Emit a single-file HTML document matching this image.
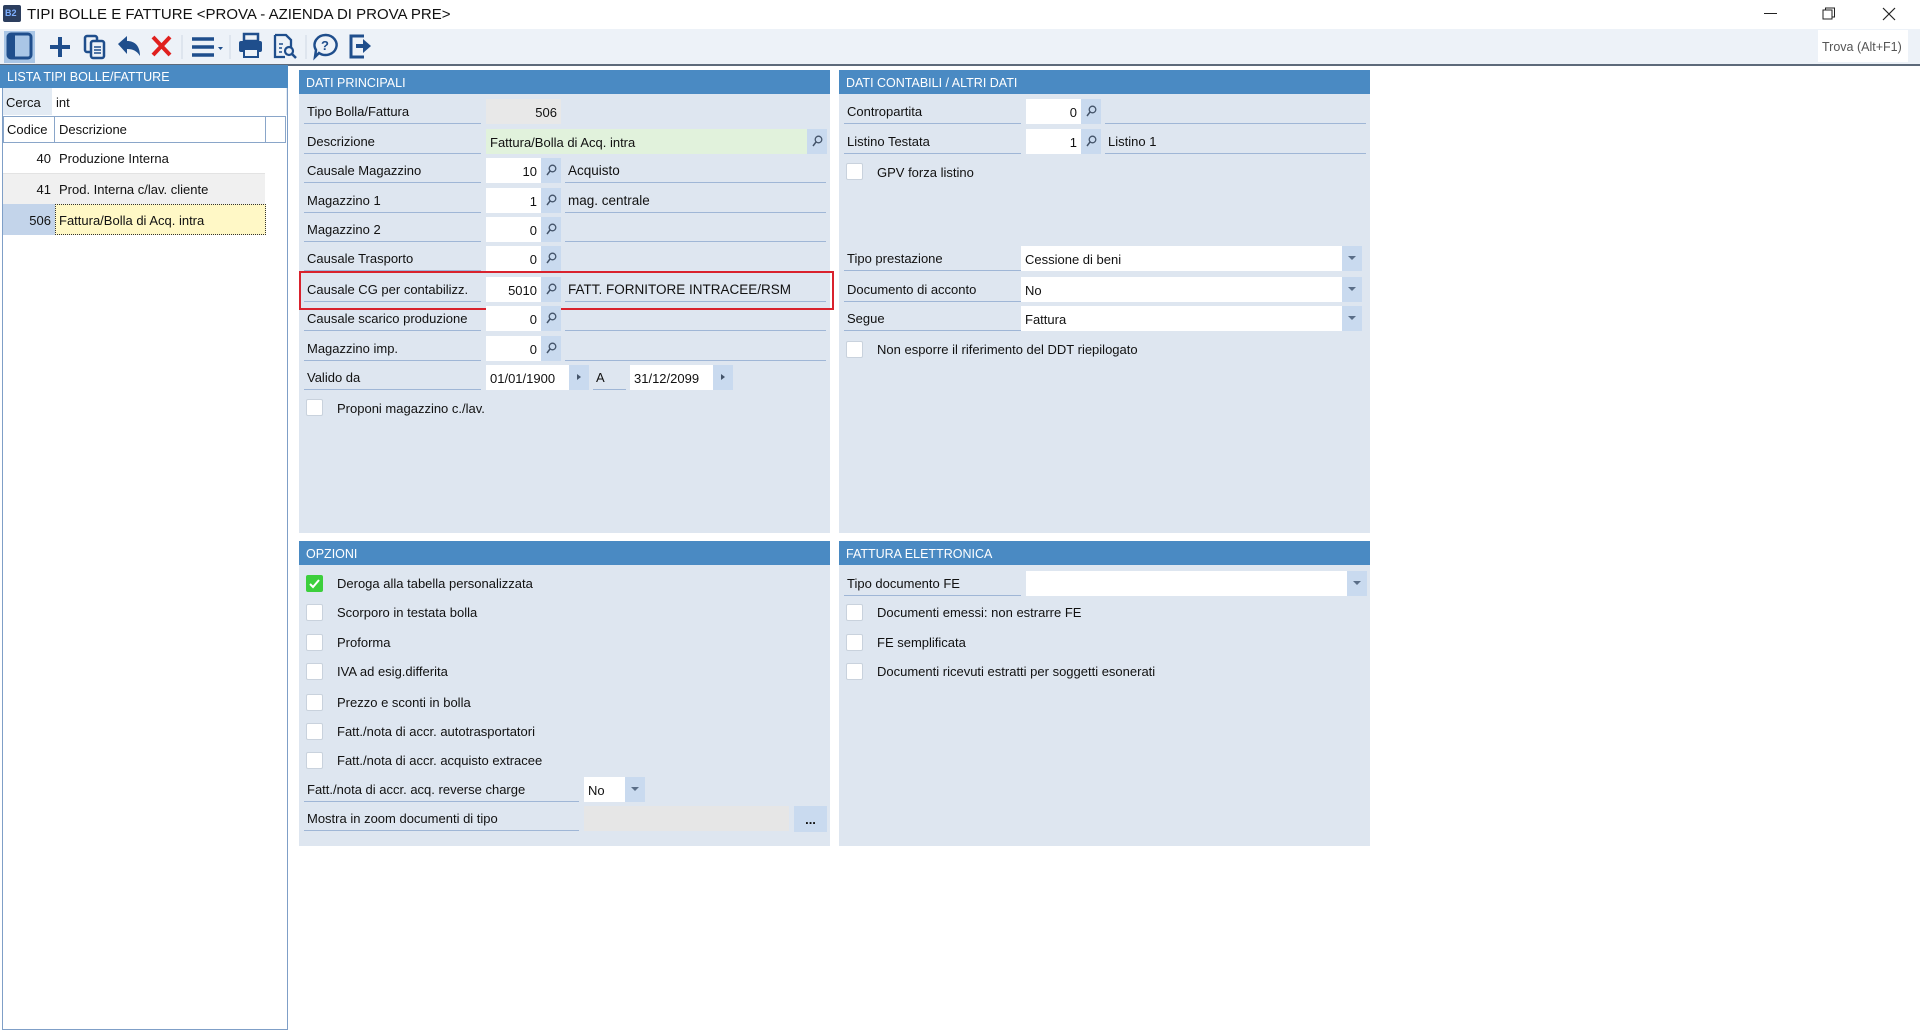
<!DOCTYPE html>
<html><head><meta charset="utf-8">
<style>
*{box-sizing:border-box;margin:0;padding:0}
body{width:1920px;height:1030px;background:#fff;font-family:"Liberation Sans",Tahoma,sans-serif;font-size:13px;color:#111;position:relative;overflow:hidden}
.a{position:absolute}
.hd{position:absolute;background:#4a8ac3;color:#fff;font-size:12.5px;padding:6px 0 0 7px;height:24px}
.pn{position:absolute;background:#dee6f0}
.lb{position:absolute;height:26px;border-bottom:1px solid #9fb6d6;padding:6px 0 0 3px;white-space:nowrap}
.in{position:absolute;height:25px;background:#fff;padding:6px 4px 0 4px;white-space:nowrap}
.r{text-align:right}
.bt{position:absolute;height:25px;width:20px;background:#c9daef}
.bt svg{position:absolute;left:5px;top:6px}
.dl{position:absolute;height:26px;border-bottom:1px solid #9fb6d6;padding:6px 0 0 3px;white-space:nowrap}
.cb{position:absolute;width:17px;height:17px;background:#fff;border:1px solid #c9d2dd;border-radius:2px}
.ct{position:absolute;white-space:nowrap}
.dd{position:absolute;width:20px;height:25px;background:#c9daef}
.dd:after{content:"";position:absolute;left:6px;top:10px;border-left:4px solid transparent;border-right:4px solid transparent;border-top:4px solid #5a6e88}
</style></head><body>
<div class="a" style="left:3px;top:5px;width:18px;height:17px;background:#2c3e5e;border-radius:2px;color:#7fb0ff;font-size:9px;font-weight:bold;padding:3px 0 0 2px">B2</div>
<div class="a" style="left:27px;top:6px;font-size:15px;color:#111">TIPI BOLLE E FATTURE &lt;PROVA - AZIENDA DI PROVA PRE&gt;</div>
<div class="a" style="left:1764px;top:13px;width:13px;height:1px;background:#222"></div>
<svg class="a" style="left:1822px;top:7px" width="14" height="14"><rect x="1" y="3" width="9" height="9" fill="none" stroke="#222"/><path d="M3.5 3V1h9v9h-2.5" fill="none" stroke="#222"/></svg>
<svg class="a" style="left:1882px;top:7px" width="14" height="14"><path d="M1 1L13 13M13 1L1 13" stroke="#222" stroke-width="1.2"/></svg>
<div class="a" style="left:0;top:29px;width:1920px;height:35px;background:#edf2f8"></div>
<div class="a" style="left:0;top:64px;width:1920px;height:2px;background:#5d6a7a"></div>
<div class="a" style="left:4px;top:31px;width:31px;height:32px;background:#a9c6e6"></div>
<svg class="a" style="left:0;top:29px" width="380" height="35">
<rect x="8" y="5" width="23" height="24" rx="3" fill="none" stroke="#1f4e8c" stroke-width="3"/><rect x="9" y="6" width="6" height="22" fill="#1f4e8c"/>
<path d="M60 8v20M50 18h20" stroke="#1f4e8c" stroke-width="4"/>
<rect x="85" y="7" width="12" height="16" rx="2" fill="none" stroke="#1f4e8c" stroke-width="2.5"/><rect x="91" y="12" width="13" height="17" rx="2" fill="#edf2f8" stroke="#1f4e8c" stroke-width="2.5"/><path d="M94 18h7M94 21h7M94 24h7" stroke="#1f4e8c" stroke-width="1.5"/>
<path d="M118 15l9-8v5c8 0 13 5 13 15c-3-5-7-7-13-7v5z" fill="#1f4e8c"/>
<path d="M153 8l17 18M170 8l-17 18" stroke="#e0201e" stroke-width="4"/>
<path d="M182 6v24M230 6v24M306 6v24" stroke="#cfd8e3"/>
<path d="M192 10h22M192 18h22M192 26h22" stroke="#1f4e8c" stroke-width="3.5"/><path d="M218 18h5l-2.5 3z" fill="#1f4e8c"/>
<rect x="244" y="5" width="14" height="7" fill="none" stroke="#1f4e8c" stroke-width="2.5"/><rect x="239" y="12" width="23" height="11" rx="2" fill="#1f4e8c"/><rect x="244" y="20" width="14" height="8" fill="#edf2f8" stroke="#1f4e8c" stroke-width="2"/>
<path d="M275 6h11l5 5v8M275 6v22h10" fill="none" stroke="#1f4e8c" stroke-width="2.3"/><path d="M279 15h4M279 19h3M279 23h3" stroke="#1f4e8c" stroke-width="1.5"/><circle cx="289" cy="22" r="4" fill="none" stroke="#1f4e8c" stroke-width="2.2"/><path d="M292 25l4 4" stroke="#1f4e8c" stroke-width="2.5"/>
<path d="M326 6a11 10 0 1 1 -7 18l-4 4 1-7a11 10 0 0 1 10-15z" fill="none" stroke="#1f4e8c" stroke-width="2.5"/><text x="321" y="21" font-family="Liberation Sans" font-weight="bold" font-size="13" fill="#1f4e8c">?</text>
<path d="M364 7h-13v21h13" fill="none" stroke="#1f4e8c" stroke-width="3"/><path d="M356 15h7v-5l8 7-8 7v-5h-7z" fill="#1f4e8c"/>
</svg>
<div class="a" style="left:1818px;top:30px;width:90px;height:32px;background:#fff;color:#555;font-size:12.5px;padding:10px 0 0 4px">Trova (Alt+F1)</div>

<div class="a" style="left:2px;top:65px;width:286px;height:965px;border:1px solid #7f9fc7;border-top:none;background:#fff"></div>
<div class="hd" style="left:0;top:65px;width:288px;height:23px;padding-top:5px">LISTA TIPI BOLLE/FATTURE</div>
<div class="a" style="left:3px;top:88px;width:284px;height:27px;background:#e3ebf4"></div>
<div class="a" style="left:6px;top:95px">Cerca</div>
<div class="a" style="left:52px;top:88px;width:234px;height:27px;background:#fff;padding:7px 0 0 4px">int</div>
<div class="a" style="left:3px;top:116px;width:283px;height:27px;border:1px solid #8aa6c9;background:#fff"></div>
<div class="a" style="left:54px;top:116px;width:1px;height:27px;background:#8aa6c9"></div>
<div class="a" style="left:265px;top:116px;width:1px;height:27px;background:#8aa6c9"></div>
<div class="a" style="left:7px;top:122px">Codice</div>
<div class="a" style="left:59px;top:122px">Descrizione</div>
<div class="a r" style="left:3px;top:151px;width:48px">40</div><div class="a" style="left:59px;top:151px">Produzione Interna</div>
<div class="a" style="left:3px;top:173px;width:262px;height:31px;background:#f0f0f0;border-top:1px solid #e3e3e3"></div>
<div class="a r" style="left:3px;top:182px;width:48px">41</div><div class="a" style="left:59px;top:182px">Prod. Interna c/lav. cliente</div>
<div class="a" style="left:3px;top:204px;width:52px;height:31px;background:#c3d4ea"></div>
<div class="a" style="left:55px;top:204px;width:211px;height:31px;background:#fff8c6;border:1px dotted #333"></div>
<div class="a r" style="left:3px;top:213px;width:48px">506</div><div class="a" style="left:59px;top:213px">Fattura/Bolla di Acq. intra</div>

<div class="pn" style="left:299px;top:70px;width:531px;height:463px"></div>
<div class="hd" style="left:299px;top:70px;width:531px">DATI PRINCIPALI</div>
<div class="lb" style="left:304px;top:98px;width:177px">Tipo Bolla/Fattura</div>
<div class="in r" style="left:486px;top:99px;width:75px;background:#e8e8e8">506</div>
<div class="lb" style="left:304px;top:128px;width:177px">Descrizione</div>
<div class="in" style="left:486px;top:129px;width:321px;background:#e1f2dc">Fattura/Bolla di Acq. intra</div>
<div class="bt" style="left:807px;top:129px"><svg width="11" height="12"><circle cx="6.5" cy="4.5" r="3.3" fill="none" stroke="#44546a" stroke-width="1.3"/><path d="M4 7L1 11" stroke="#44546a" stroke-width="1.5"/></svg></div>

<div class="lb" style="left:304px;top:157px;width:177px">Causale Magazzino</div>
<div class="in r" style="left:486px;top:158px;width:55px">10</div>
<div class="bt" style="left:541px;top:158px"><svg width="11" height="12"><circle cx="6.5" cy="4.5" r="3.3" fill="none" stroke="#44546a" stroke-width="1.3"/><path d="M4 7L1 11" stroke="#44546a" stroke-width="1.5"/></svg></div>
<div class="dl" style="left:565px;top:157px;width:261px;font-size:13.5px">Acquisto</div>

<div class="lb" style="left:304px;top:187px;width:177px">Magazzino 1</div>
<div class="in r" style="left:486px;top:188px;width:55px">1</div>
<div class="bt" style="left:541px;top:188px"><svg width="11" height="12"><circle cx="6.5" cy="4.5" r="3.3" fill="none" stroke="#44546a" stroke-width="1.3"/><path d="M4 7L1 11" stroke="#44546a" stroke-width="1.5"/></svg></div>
<div class="dl" style="left:565px;top:187px;width:261px;font-size:13.5px">mag. centrale</div>

<div class="lb" style="left:304px;top:216px;width:177px">Magazzino 2</div>
<div class="in r" style="left:486px;top:217px;width:55px">0</div>
<div class="bt" style="left:541px;top:217px"><svg width="11" height="12"><circle cx="6.5" cy="4.5" r="3.3" fill="none" stroke="#44546a" stroke-width="1.3"/><path d="M4 7L1 11" stroke="#44546a" stroke-width="1.5"/></svg></div>
<div class="dl" style="left:565px;top:216px;width:261px"></div>

<div class="lb" style="left:304px;top:245px;width:177px">Causale Trasporto</div>
<div class="in r" style="left:486px;top:246px;width:55px">0</div>
<div class="bt" style="left:541px;top:246px"><svg width="11" height="12"><circle cx="6.5" cy="4.5" r="3.3" fill="none" stroke="#44546a" stroke-width="1.3"/><path d="M4 7L1 11" stroke="#44546a" stroke-width="1.5"/></svg></div>

<div class="lb" style="left:304px;top:276px;width:177px">Causale CG per contabilizz.</div>
<div class="in r" style="left:486px;top:277px;width:55px">5010</div>
<div class="bt" style="left:541px;top:277px"><svg width="11" height="12"><circle cx="6.5" cy="4.5" r="3.3" fill="none" stroke="#44546a" stroke-width="1.3"/><path d="M4 7L1 11" stroke="#44546a" stroke-width="1.5"/></svg></div>
<div class="dl" style="left:565px;top:276px;width:261px;font-size:13.5px">FATT. FORNITORE INTRACEE/RSM</div>
<div class="a" style="left:299px;top:271px;width:535px;height:39px;border:2.5px solid #d9222d"></div>

<div class="lb" style="left:304px;top:305px;width:177px">Causale scarico produzione</div>
<div class="in r" style="left:486px;top:306px;width:55px">0</div>
<div class="bt" style="left:541px;top:306px"><svg width="11" height="12"><circle cx="6.5" cy="4.5" r="3.3" fill="none" stroke="#44546a" stroke-width="1.3"/><path d="M4 7L1 11" stroke="#44546a" stroke-width="1.5"/></svg></div>
<div class="dl" style="left:565px;top:305px;width:261px"></div>

<div class="lb" style="left:304px;top:335px;width:177px">Magazzino imp.</div>
<div class="in r" style="left:486px;top:336px;width:55px">0</div>
<div class="bt" style="left:541px;top:336px"><svg width="11" height="12"><circle cx="6.5" cy="4.5" r="3.3" fill="none" stroke="#44546a" stroke-width="1.3"/><path d="M4 7L1 11" stroke="#44546a" stroke-width="1.5"/></svg></div>
<div class="dl" style="left:565px;top:335px;width:261px"></div>

<div class="lb" style="left:304px;top:364px;width:177px">Valido da</div>
<div class="in" style="left:486px;top:365px;width:83px">01/01/1900</div>
<div class="bt" style="left:569px;top:365px"><svg width="10" height="12"><path d="M3 3l4 3-4 3z" fill="#44546a"/></svg></div>
<div class="dl" style="left:593px;top:364px;width:33px">A</div>
<div class="in" style="left:630px;top:365px;width:83px">31/12/2099</div>
<div class="bt" style="left:713px;top:365px"><svg width="10" height="12"><path d="M3 3l4 3-4 3z" fill="#44546a"/></svg></div>
<div class="cb" style="left:306px;top:399px"></div><div class="ct" style="left:337px;top:401px">Proponi magazzino c./lav.</div>

<div class="pn" style="left:839px;top:70px;width:531px;height:463px"></div>
<div class="hd" style="left:839px;top:70px;width:531px">DATI CONTABILI / ALTRI DATI</div>
<div class="lb" style="left:844px;top:98px;width:177px">Contropartita</div>
<div class="in r" style="left:1026px;top:99px;width:55px">0</div>
<div class="bt" style="left:1081px;top:99px"><svg width="11" height="12"><circle cx="6.5" cy="4.5" r="3.3" fill="none" stroke="#44546a" stroke-width="1.3"/><path d="M4 7L1 11" stroke="#44546a" stroke-width="1.5"/></svg></div>
<div class="dl" style="left:1105px;top:98px;width:261px"></div>
<div class="lb" style="left:844px;top:128px;width:177px">Listino Testata</div>
<div class="in r" style="left:1026px;top:129px;width:55px">1</div>
<div class="bt" style="left:1081px;top:129px"><svg width="11" height="12"><circle cx="6.5" cy="4.5" r="3.3" fill="none" stroke="#44546a" stroke-width="1.3"/><path d="M4 7L1 11" stroke="#44546a" stroke-width="1.5"/></svg></div>
<div class="dl" style="left:1105px;top:128px;width:261px">Listino 1</div>
<div class="cb" style="left:846px;top:163px"></div><div class="ct" style="left:877px;top:165px">GPV forza listino</div>
<div class="lb" style="left:844px;top:245px;width:177px">Tipo prestazione</div>
<div class="in" style="left:1021px;top:246px;width:321px">Cessione di beni</div><div class="dd" style="left:1342px;top:246px"></div>
<div class="lb" style="left:844px;top:276px;width:177px">Documento di acconto</div>
<div class="in" style="left:1021px;top:277px;width:321px">No</div><div class="dd" style="left:1342px;top:277px"></div>
<div class="lb" style="left:844px;top:305px;width:177px">Segue</div>
<div class="in" style="left:1021px;top:306px;width:321px">Fattura</div><div class="dd" style="left:1342px;top:306px"></div>
<div class="cb" style="left:846px;top:341px"></div><div class="ct" style="left:877px;top:342px">Non esporre il riferimento del DDT riepilogato</div>

<div class="pn" style="left:299px;top:541px;width:531px;height:305px"></div>
<div class="hd" style="left:299px;top:541px;width:531px">OPZIONI</div>
<div class="cb" style="left:306px;top:575px;background:#3ccf3c;border-color:#3ccf3c"><svg width="15" height="15" style="position:absolute;left:0;top:0"><path d="M3 8l3 3 6-7" fill="none" stroke="#fff" stroke-width="2"/></svg></div>
<div class="ct" style="left:337px;top:576px">Deroga alla tabella personalizzata</div>
<div class="cb" style="left:306px;top:604px"></div><div class="ct" style="left:337px;top:605px">Scorporo in testata bolla</div>
<div class="cb" style="left:306px;top:634px"></div><div class="ct" style="left:337px;top:635px">Proforma</div>
<div class="cb" style="left:306px;top:663px"></div><div class="ct" style="left:337px;top:664px">IVA ad esig.differita</div>
<div class="cb" style="left:306px;top:694px"></div><div class="ct" style="left:337px;top:695px">Prezzo e sconti in bolla</div>
<div class="cb" style="left:306px;top:723px"></div><div class="ct" style="left:337px;top:724px">Fatt./nota di accr. autotrasportatori</div>
<div class="cb" style="left:306px;top:752px"></div><div class="ct" style="left:337px;top:753px">Fatt./nota di accr. acquisto extracee</div>
<div class="lb" style="left:304px;top:776px;width:275px">Fatt./nota di accr. acq. reverse charge</div>
<div class="in" style="left:584px;top:777px;width:41px">No</div><div class="dd" style="left:625px;top:777px"></div>
<div class="lb" style="left:304px;top:805px;width:275px">Mostra in zoom documenti di tipo</div>
<div class="in" style="left:584px;top:806px;width:205px;background:#e6e6e6"></div>
<div class="a" style="left:794px;top:806px;width:33px;height:26px;background:#c9daef;text-align:center;padding-top:6px;font-weight:bold">...</div>

<div class="pn" style="left:839px;top:541px;width:531px;height:305px"></div>
<div class="hd" style="left:839px;top:541px;width:531px">FATTURA ELETTRONICA</div>
<div class="lb" style="left:844px;top:570px;width:177px">Tipo documento FE</div>
<div class="in" style="left:1026px;top:571px;width:321px"></div><div class="dd" style="left:1347px;top:571px"></div>
<div class="cb" style="left:846px;top:604px"></div><div class="ct" style="left:877px;top:605px">Documenti emessi: non estrarre FE</div>
<div class="cb" style="left:846px;top:634px"></div><div class="ct" style="left:877px;top:635px">FE semplificata</div>
<div class="cb" style="left:846px;top:663px"></div><div class="ct" style="left:877px;top:664px">Documenti ricevuti estratti per soggetti esonerati</div>
</body></html>
